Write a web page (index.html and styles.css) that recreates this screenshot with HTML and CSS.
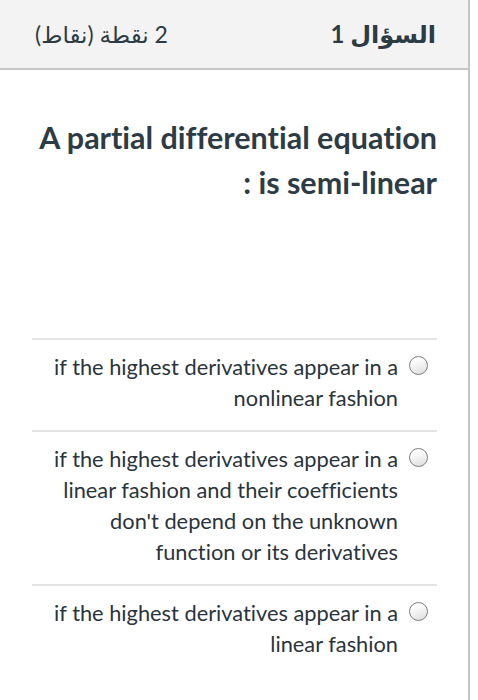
FILE: index.html
```html
<!DOCTYPE html>
<html lang="ar">
<head>
<meta charset="utf-8">
<link rel="stylesheet" href="styles.css">
</head>
<body>
<div class="page" dir="rtl">
  <div class="header">
    <span class="q-title">السؤال 1</span>
    <span class="q-points">2 نقطة (نقاط)</span>
  </div>
  <div class="content">
    <p class="question">A partial differential equation is semi-linear :</p>
    <div class="answers">
      <label class="option">
        <span class="radio"></span>
        <span class="opt-text">if the highest derivatives appear in a nonlinear fashion</span>
      </label>
      <label class="option">
        <span class="radio"></span>
        <span class="opt-text">if the highest derivatives appear in a linear fashion and their coefficients don't depend on the unknown function or its derivatives</span>
      </label>
      <label class="option">
        <span class="radio"></span>
        <span class="opt-text">if the highest derivatives appear in a linear fashion</span>
      </label>
    </div>
  </div>
</div>
</body>
</html>
```
FILE: styles.css
```css
html, body {
  margin: 0;
  padding: 0;
  background: #ffffff;
}
body {
  font-family: Lato, "DejaVu Sans", sans-serif;
  color: #2d3b45;
}
.page {
  width: 468px;
  min-height: 700px;
  border-right: 2px solid #c4c4c4;
  direction: rtl;
}
.header {
  height: 68px;
  background: #f3f3f3;
  border-bottom: 2px solid #c6c6c6;
  display: flex;
  align-items: center;
  justify-content: space-between;
  padding: 0 32px 0 35px;
}
.q-title {
  font-size: 24px;
  font-weight: 700;
}
.q-points {
  font-size: 23px;
}
.content {
  padding: 0 31px 0 32px;
}
.question {
  margin: 45px 0 133px;
  font-size: 30.5px;
  font-weight: 700;
  line-height: 45px;
  text-align: right;
  font-variant-ligatures: no-common-ligatures;
}
.option {
  display: flex;
  align-items: flex-start;
  gap: 11px;
  border-top: 2px solid #e4e4e4;
  padding: 11px 9px 17px 0;
}
.radio {
  flex: none;
  width: 17px;
  height: 17px;
  margin-top: 5px;
  border: 1px solid #7d7d7d;
  border-radius: 50%;
  background: linear-gradient(160deg, #ffffff 20%, #dcdcdc);
}
.opt-text {
  width: 356px;
  font-size: 21.8px;
  line-height: 31px;
  text-align: right;
  color: #2a343c;
  font-variant-ligatures: no-common-ligatures;
}
```
